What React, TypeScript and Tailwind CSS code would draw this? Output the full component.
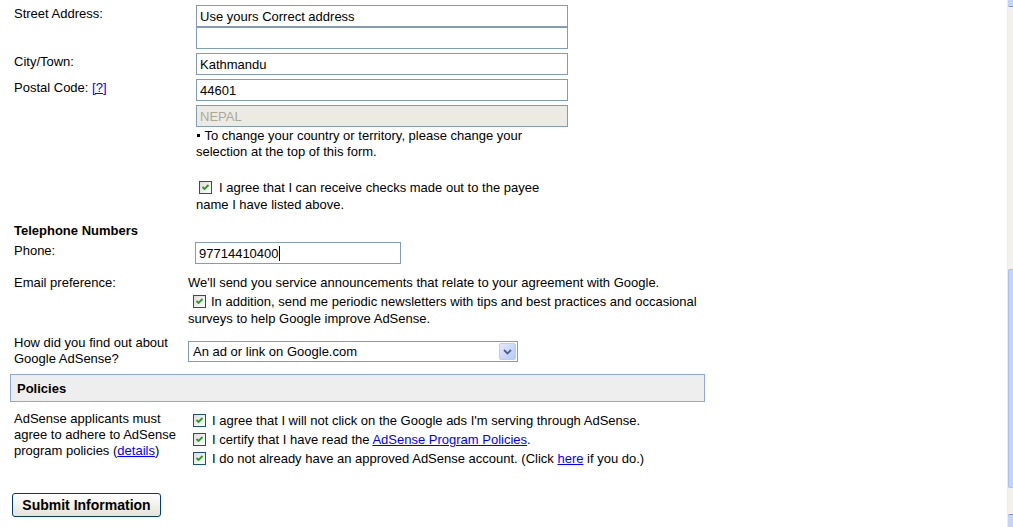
import type { ReactNode } from 'react';

const FONT = { fontFamily: '"Liberation Sans", Arial, sans-serif' };

function TextBox({ value = '', disabled = false, width = 'w-[372px]', caret = false }: {
  value?: string;
  disabled?: boolean;
  width?: string;
  caret?: boolean;
}) {
  return (
    <div
      className={`${width} h-[22px] border border-[#7f9db9] px-[3px] pt-px leading-[20px] whitespace-nowrap ${
        disabled ? 'bg-[#ebebe4] text-[#aca899]' : 'bg-white text-black'
      }`}
    >
      {value}
      {caret && <span className="inline-block w-px h-[15px] bg-black align-[-3px]" />}
    </div>
  );
}

function Check() {
  return (
    <span className="inline-block w-[13px] h-[13px] border border-[#1c5180] bg-gradient-to-br from-[#dcdcd7] to-white align-[-2px] relative">
      <svg viewBox="0 0 11 11" className="absolute inset-0 w-[11px] h-[11px]">
        <path d="M2.5 5 L4.5 7 L8.5 3" fill="none" stroke="#21a121" strokeWidth="1.8" />
      </svg>
    </span>
  );
}

function Link({ children }: { children: ReactNode }) {
  return <span className="text-[#0000ff] underline">{children}</span>;
}

function Scrollbar() {
  return (
    <div className="w-[6px] h-full flex flex-col bg-[#f3f1ec] border-l border-[#ecebe6]">
      <div className="h-[7px] bg-[#c4d5fc] border-b border-[#7a97d8] rounded-bl-[2px]" />
      <div className="h-[262px]" />
      <div className="h-[219px] bg-[#c3d4fc] border border-r-0 border-[#a9c1f4] rounded-l-[2px]" />
      <div className="flex-1" />
      <div className="h-[13px] bg-[#c4d5fc] border-t border-[#7a97d8] rounded-tl-[2px]" />
    </div>
  );
}

export default function App() {
  return (
    <div className="w-[1013px] h-[527px] flex bg-white overflow-hidden text-[13px] text-black" style={FONT}>
      <div className="flex-1 pl-[14px] pt-[5px]">
        {/* Address */}
        <div className="flex">
          <div className="w-[182px] leading-4 pt-px">Street Address:</div>
          <div>
            <TextBox value="Use yours Correct address" />
            <TextBox />
          </div>
        </div>
        <div className="flex mt-[4px]">
          <div className="w-[182px] leading-4 pt-px">City/Town:</div>
          <TextBox value="Kathmandu" />
        </div>
        <div className="flex mt-[4px]">
          <div className="w-[182px] leading-4 pt-px">
            Postal Code: <Link>[?]</Link>
          </div>
          <TextBox value="44601" />
        </div>
        <div className="pl-[182px] mt-[4px] w-[554px]">
          <TextBox value="NEPAL" disabled />
          <p className="leading-4 pt-px">
            <span className="inline-block w-[3px] h-[3px] bg-black align-[3px] mx-[1px]" /> To change your country or
            territory, please change your selection at the top of this form.
          </p>
          <p className="leading-[17px] mt-[19px]">
            <span className="ml-[3px] mr-[7px]">
              <Check />
            </span>
            I agree that I can receive checks made out to the payee name I have listed above.
          </p>
        </div>

        {/* Telephone */}
        <div className="font-bold leading-4 mt-[10px]">Telephone Numbers</div>
        <div className="flex mt-[3px]">
          <div className="w-[181px] leading-4 pt-px">Phone:</div>
          <TextBox value="97714410400" width="w-[206px]" caret />
        </div>

        <div className="flex mt-[10px]">
          <div className="w-[174px] leading-4 pt-px">Email preference:</div>
          <div className="w-[517px] pt-px">
            <p className="leading-4">We'll send you service announcements that relate to your agreement with Google.</p>
            <p className="leading-[17px] mt-[2px]">
              <span className="ml-[5px] mr-[5px]">
                <Check />
              </span>
              In addition, send me periodic newsletters with tips and best practices and occasional surveys to help
              Google improve AdSense.
            </p>
          </div>
        </div>

        <div className="flex mt-[8px]">
          <div className="w-[174px] leading-4">
            How did you find out about
            <br />
            Google AdSense?
          </div>
          <div className="mt-[6px] w-[330px] h-[21px] border border-[#7f9db9] bg-white flex items-center justify-between pl-[4px] pr-px">
            <span className="leading-4">An ad or link on Google.com</span>
            <div className="w-[17px] h-[17px] rounded-[2px] border border-[#b9ccf5] bg-gradient-to-br from-[#e1eaff] to-[#b5c9f6] flex items-center justify-center">
              <svg viewBox="0 0 9 6" className="w-[9px] h-[6px]">
                <path d="M1 1 L4.5 4.5 L8 1" fill="none" stroke="#4d6185" strokeWidth="1.8" />
              </svg>
            </div>
          </div>
        </div>

        {/* Policies */}
        <div className="ml-[-4px] mt-[7px] w-[695px] h-[28px] border border-[#8caad6] bg-[#eeeeee] flex items-center pl-[6px] pt-px font-bold">
          Policies
        </div>
        <div className="flex mt-[9px]">
          <div className="w-[179px] leading-4 pr-[8px]">
            AdSense applicants must agree to adhere to AdSense program policies (<Link>details</Link>)
          </div>
          <div>
            <div className="h-[19px] leading-[19px]">
              <span className="mr-[6px]">
                <Check />
              </span>
              I agree that I will not click on the Google ads I'm serving through AdSense.
            </div>
            <div className="h-[19px] leading-[19px]">
              <span className="mr-[6px]">
                <Check />
              </span>
              I certify that I have read the <Link>AdSense Program Policies</Link>.
            </div>
            <div className="h-[19px] leading-[19px]">
              <span className="mr-[6px]">
                <Check />
              </span>
              I do not already have an approved AdSense account. (Click <Link>here</Link> if you do.)
            </div>
          </div>
        </div>

        <button
          className="ml-[-2px] mt-[25px] w-[149px] h-[24px] rounded-[3px] border border-[#003c74] bg-gradient-to-b from-white to-[#e6e3d6] font-bold text-[14px] leading-[20px]"
          style={FONT}
        >
          Submit Information
        </button>
      </div>
      <Scrollbar />
    </div>
  );
}
